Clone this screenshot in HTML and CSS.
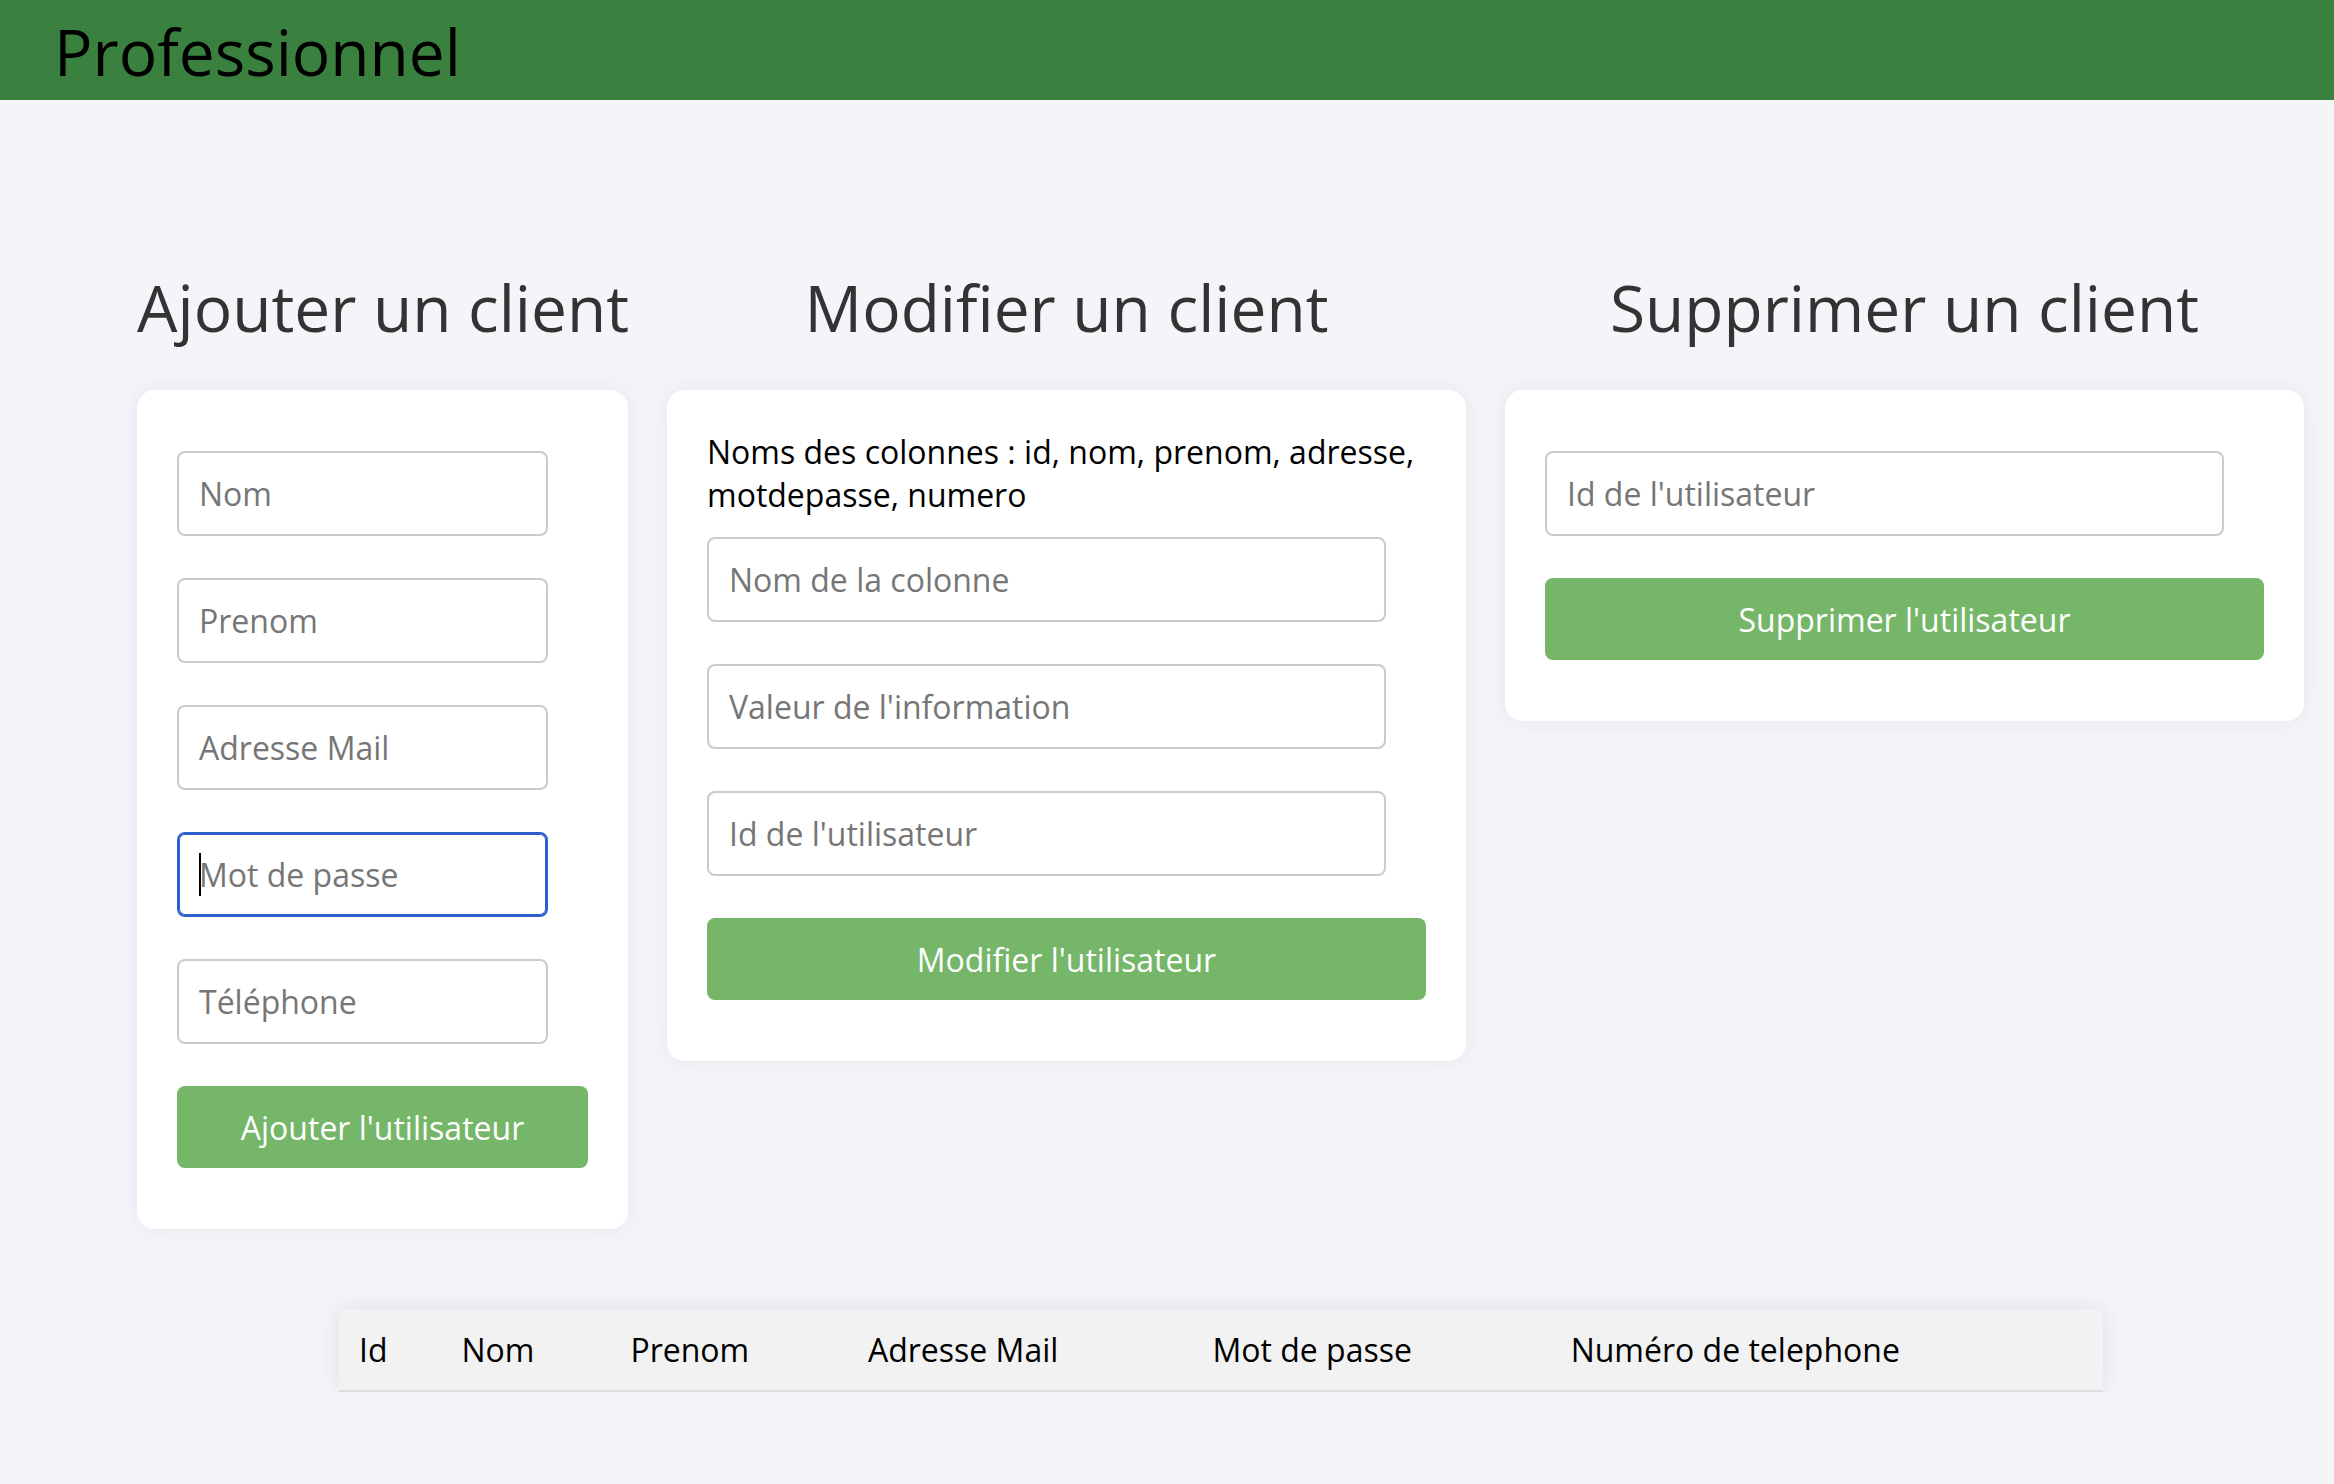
FILE: index.html
```html
<!DOCTYPE html>
<html lang="fr">
<head>
<meta charset="utf-8">
<title>Professionnel</title>
<link rel="stylesheet" href="styles.css">
</head>
<body>
<header class="topbar">
  <h1 class="brand">Professionnel</h1>
</header>
<main class="panels">
  <section class="panel panel-add">
    <h2 class="panel-title">Ajouter un client</h2>
    <form class="card">
      <input class="field-input" type="text" placeholder="Nom">
      <input class="field-input" type="text" placeholder="Prenom">
      <input class="field-input" type="text" placeholder="Adresse Mail">
      <div class="field-wrap">
        <input class="field-input field-focus" type="password" placeholder="Mot de passe">
        <span class="caret"></span>
      </div>
      <input class="field-input" type="text" placeholder="Téléphone">
      <button class="btn" type="button">Ajouter l'utilisateur</button>
    </form>
  </section>
  <section class="panel panel-wide">
    <h2 class="panel-title">Modifier un client</h2>
    <form class="card">
      <p class="hint">Noms des colonnes : id, nom, prenom, adresse, motdepasse, numero</p>
      <input class="field-input" type="text" placeholder="Nom de la colonne">
      <input class="field-input" type="text" placeholder="Valeur de l'information">
      <input class="field-input" type="text" placeholder="Id de l'utilisateur">
      <button class="btn" type="button">Modifier l'utilisateur</button>
    </form>
  </section>
  <section class="panel panel-wide">
    <h2 class="panel-title">Supprimer un client</h2>
    <form class="card">
      <input class="field-input" type="text" placeholder="Id de l'utilisateur">
      <button class="btn" type="button">Supprimer l'utilisateur</button>
    </form>
  </section>
</main>
<div class="table-wrap">
  <table class="clients">
    <thead>
      <tr>
        <th>Id</th>
        <th>Nom</th>
        <th>Prenom</th>
        <th>Adresse Mail</th>
        <th>Mot de passe</th>
        <th>Numéro de telephone</th>
      </tr>
    </thead>
  </table>
</div>
</body>
</html>
```
FILE: styles.css
```css
* {
  box-sizing: border-box;
}

body {
  margin: 0;
  background: #f4f5f9;
  font-family: "Open Sans", "Noto Sans", sans-serif;
  color: #000;
}

.topbar {
  height: 100px;
  background: #3a8140;
  padding: 8px 0 0 54px;
}

.brand {
  margin: 0;
  font-size: 64px;
  font-weight: 400;
  line-height: 87px;
  color: #000;
}

.panels {
  display: flex;
  align-items: flex-start;
  gap: 39px;
  padding: 164px 0 0 137px;
}

.panel {
  display: flex;
  flex-direction: column;
  flex: none;
}

.panel-add {
  width: 491px;
}

.panel-wide {
  width: 799px;
}

.panel-title {
  margin: 0 0 39px;
  font-size: 64px;
  font-weight: 400;
  line-height: 87px;
  color: #333;
  text-align: center;
  white-space: nowrap;
}

.card {
  display: flex;
  flex-direction: column;
  align-items: flex-start;
  background: #fff;
  border-radius: 18px;
  padding: 40px;
  box-shadow: 0 0 22px rgba(30, 40, 80, 0.07);
}

.hint {
  margin: 0;
  font-size: 32px;
  line-height: 43px;
}

.field-input {
  display: block;
  width: calc(100% - 40px);
  min-width: 0;
  height: 85px;
  margin: 21px 0;
  padding: 0 20px;
  border: 2px solid #cbcbcb;
  border-radius: 8px;
  background: #fff;
  font-family: "Open Sans", "Noto Sans", sans-serif;
  font-size: 32px;
  color: #000;
  outline: none;
}

.field-input::placeholder {
  color: #767676;
}

.field-wrap {
  position: relative;
  width: calc(100% - 40px);
  margin: 21px 0;
}

.field-wrap .field-input {
  width: 100%;
  margin: 0;
}

.field-focus {
  border-color: #2c5fcb;
  box-shadow: inset 0 0 0 1px #2c5fcb;
}

.caret {
  position: absolute;
  left: 22px;
  top: 21px;
  width: 2px;
  height: 43px;
  background: #000;
}

.btn {
  width: 100%;
  height: 82px;
  margin: 21px 0;
  border: none;
  border-radius: 8px;
  background: #75b669;
  color: #fff;
  font-family: "Open Sans", "Noto Sans", sans-serif;
  font-size: 32px;
}

.table-wrap {
  padding: 80px 0 0 339px;
}

.clients {
  width: 1764px;
  border-collapse: collapse;
  background: #f2f2f2;
  border-bottom: 2px solid #dcdcdc;
  box-shadow: 0 0 22px rgba(30, 40, 80, 0.1);
}

.clients th {
  padding: 19px 20px;
  font-size: 32px;
  font-weight: 400;
  line-height: 43px;
  text-align: left;
  color: #000;
}
```
